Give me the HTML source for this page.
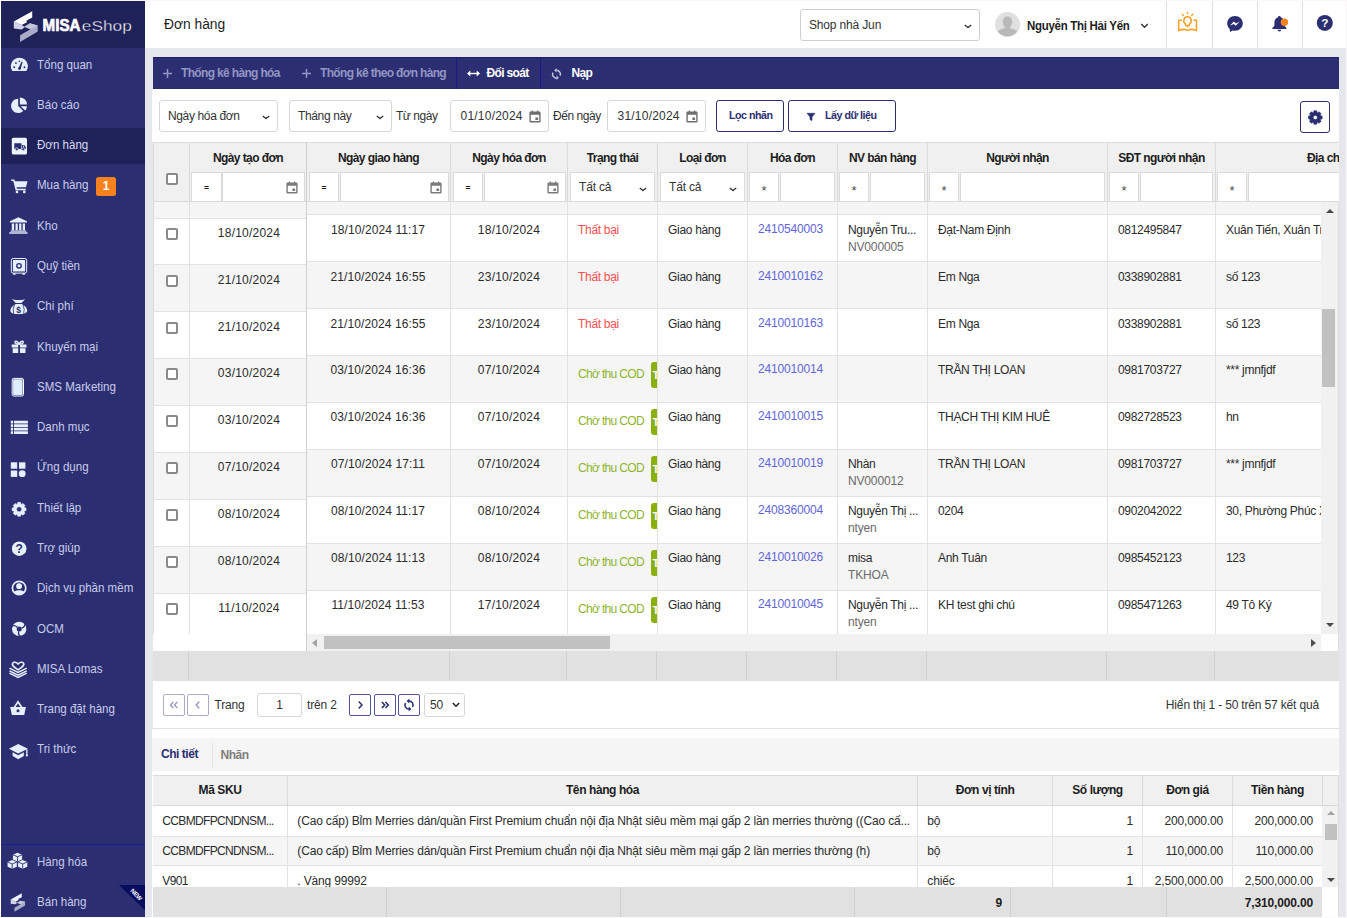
<!DOCTYPE html>
<html lang="vi"><head><meta charset="utf-8"><title>Đơn hàng</title>
<style>
*{box-sizing:border-box;margin:0;padding:0}
html,body{width:1347px;height:918px;overflow:hidden}
body{position:relative;background:#e6e7ec;font-family:"Liberation Sans",sans-serif;font-size:12px;color:#2b2b2b;line-height:1}
i,s,b{font-style:normal;text-decoration:none;font-weight:normal;display:block}
svg{display:block}
/* sidebar */
#side{position:absolute;left:1px;top:1px;width:144px;height:916px;background:#2b2f71;overflow:hidden}
#logo{position:absolute;left:0;top:0;width:144px;height:47px;background:#1f2259}
#logo svg{position:absolute;left:0;top:0}
.mi{position:absolute;left:0;width:144px;height:36px;color:#c9cbec;margin-top:-1px}
.mi.act{background:#1f2259;color:#d6d8f2}
.mi .ic{position:absolute;left:9px;top:8px;width:20px;height:20px}
.mi .ic svg{overflow:visible}
.mi .mt{position:absolute;left:36px;top:11.3px;font-size:12.6px;white-space:nowrap;transform:scaleX(.917);transform-origin:0 50%}
.badge{position:absolute;left:95px;top:9px;width:20px;height:19px;border-radius:2.5px;background:#f5821f;color:#fff;font-weight:bold;font-size:12px;text-align:center;line-height:19px}
.sdiv{position:absolute;left:0;top:843px;width:144px;height:1px;background:#1c1d8e}
.newtag{position:absolute;left:118px;top:884px}
/* top */
#top{position:absolute;left:145px;top:1px;width:1202px;height:47px;background:#fff}
#top .ttl{position:absolute;left:19px;top:16.7px;font-size:13.8px;color:#1d1d1d}
#top .shop{position:absolute;left:655px;top:8px;width:180px;height:32px;border:1px solid #cfcfcf;border-radius:3px;background:#fff}
#top .shop span{position:absolute;left:8px;top:9px;font-size:12px;letter-spacing:-.16px;color:#333}
#top .shop svg{position:absolute;right:7.5px;top:13.5px}
#top .ava{position:absolute;left:850px;top:10.5px;width:25px;height:25px}
#top .uname{position:absolute;left:882px;top:19.4px;font-weight:bold;font-size:12.6px;color:#1d1d1d;white-space:nowrap;letter-spacing:-.3px;transform:scaleX(.91);transform-origin:0 50%}
#top .uchev{position:absolute;left:995px;top:21.5px}
#top .vd{position:absolute;top:0;width:1px;height:47px;background:#e0e0e0}
#top .ti{position:absolute;top:9px;width:26px;height:28px}
#wbg{position:absolute;left:153px;top:89px;width:1186px;height:829px;background:#fff}
#wb1{position:absolute;left:152px;top:89px;width:1px;height:53px;background:#fff}
#wb2{position:absolute;left:152px;top:729px;width:1px;height:188px;background:#fff}
#wb3{position:absolute;left:152px;top:738px;width:1px;height:33px;background:#f5f5f5}
/* toolbar */
#tb{position:absolute;left:153px;top:57px;width:1186px;height:32px;background:#2b2f71;box-shadow:inset 0 1px 0 #1e2168}
.tbi{position:absolute;top:0;height:32px;color:#fff;font-weight:bold;font-size:12px;white-space:nowrap;letter-spacing:-0.66px}
.tbi.dim{color:#9295c4}
.tbi svg{position:absolute;left:0;top:11px}
.tbi span{position:absolute;left:19px;top:10px}
.tbi:not(.dim) span{left:21px}
.tbd{position:absolute;top:0;width:1px;height:32px;background:#1a1a8e}
/* filter bar */
#flt{position:absolute;left:153px;top:89px;width:1186px;height:53px;background:#fff}
.sel{position:absolute;top:11px;height:32px;border:1px solid #d6d6d6;border-radius:3px;background:#fff}
.sel span{position:absolute;left:8px;top:9px;font-size:12px;color:#333;white-space:nowrap;letter-spacing:-0.36px}
.sel svg{position:absolute;right:7.5px;top:13.5px}
.sel svg.cal{right:7px;top:9px}
.lb{position:absolute;top:21px;font-size:12px;color:#333;white-space:nowrap;letter-spacing:-0.46px}
.btn{position:absolute;top:11px;height:32px;border:1px solid #2b2f71;border-radius:3px;background:#fff;color:#2b2f71;font-weight:bold;font-size:10.7px;white-space:nowrap}
.btn span{position:absolute;top:8.6px;left:12px;letter-spacing:-.5px}
.btn svg{position:absolute;left:17px;top:10.5px}
.btn svg + span{left:36px}
.gearb{position:absolute;left:1147px;top:12px;width:30px;height:32px;border:1px solid #2b2f71;border-radius:3px;background:#fff}
.gearb svg{position:absolute;left:6px;top:7px}
/* grid */
#grid{position:absolute;left:153px;top:142px;width:1186px;height:539px;background:#fff;overflow:hidden}
#ghead{position:absolute;left:0;top:0;width:1186px;height:60px;background:#f0f0f0;border-top:1px solid #dcdcdc;border-bottom:1px solid #d9d9d9;z-index:3}
.hc{position:absolute;top:0;height:59px;border-left:1px solid #d9d9d9}
.hc:first-child{border-left:1px solid #dcdcdc}
.ht{position:absolute;left:0;right:0;top:9px;text-align:center;font-weight:bold;font-size:12px;color:#1d1d1d;white-space:nowrap;letter-spacing:-0.58px}
.fop,.fin{position:absolute;top:29px;height:30px;background:#fff;border:1px solid #dadada}
.eq{position:absolute;left:0;right:0;top:11px;text-align:center;font-size:8.5px;font-weight:bold;color:#222}
.as{position:absolute;left:0;right:0;top:11px;text-align:center;font-size:13px;color:#4a4a4a}
.fin svg{position:absolute;right:6px;top:8px}
.ft{position:absolute;left:8px;top:8px;font-size:12px;letter-spacing:-.16px;color:#333}
.cb{position:absolute;width:12px;height:12px;border:2px solid #8a8a8a;border-radius:2px;background:#fff}
#fz{position:absolute;left:0;top:60px;width:153px;height:432px;overflow:hidden;background:#fff;z-index:2}
#sc{position:absolute;left:153px;top:60px;width:1015px;height:432px;overflow:hidden;background:#fff}
#fzb{position:absolute;left:153px;top:0;width:1px;height:509px;background:#cfcfcf;z-index:4}
.r{position:absolute;left:0;right:0;background:#fff;border-bottom:1px solid #e2e2e2}
.r.alt{background:#f5f5f5}
.c{position:absolute;top:0;bottom:0;border-left:1px solid #e2e2e2;overflow:hidden;white-space:nowrap}
#fz .c:first-child{border-left:1px solid #dcdcdc}#sc .c:first-child{border-left:none}
.tx{position:absolute;left:10px;top:9.4px;font-size:12px;color:#2b2b2b;letter-spacing:-0.31px}
.ctr .tx{left:0;right:0;text-align:center}
.fzt{top:8.4px;left:2px !important}
.tx2{position:absolute;left:10px;top:26.4px;font-size:12px;letter-spacing:-.16px;color:#6a6a6a}
.red{color:#f85050}
.grn{color:#8eb52c;top:13.3px;letter-spacing:-.66px}
.lnk{color:#6166d8;top:7.6px;letter-spacing:-.16px}
.tag{position:absolute;left:82.5px;top:6px;width:40px;height:26px;border-radius:3px;background:#8ab00c;color:#fff;font-weight:bold;font-size:11px;padding:8px 0 0 2px}
/* scrollbars */
#vsb{position:absolute;left:1168px;top:60px;width:17px;height:432px;background:#f1f1f1}
#hsb{position:absolute;left:154px;top:492px;width:1014px;height:17px;background:#f1f1f1}
#vsb b{position:absolute;left:1px;width:13px;top:106.5px;height:78.5px;background:#c1c1c1}
#hsb b{position:absolute;top:2px;height:13px;left:17px;width:286px;background:#c1c1c1}
.up,.dn,.lf,.rg{position:absolute;width:0;height:0;border:4px solid transparent}
.up{left:4.5px;top:7px;border-bottom:4px solid #4a4a4a;border-top:none}
.dn{left:4.5px;bottom:7px;border-top:4px solid #4a4a4a;border-bottom:none}
.lf{left:5px;top:4.5px;border-right:5px solid #a3a3a3;border-left:none}
.rg{right:5.5px;top:4.5px;border-left:5px solid #505050;border-right:none}
#gsum{position:absolute;left:0;top:509px;width:1186px;height:30px;background:#e1e1e1}
#gsum s{position:absolute;top:0;width:1px;height:29px;background:#d0d0d0}
/* pager */
#pager{position:absolute;left:153px;top:681px;width:1186px;height:48px;background:#fff;border-bottom:1px solid #e2e2e2}
.pb{position:absolute;top:13px;width:22px;height:22px;border:1px solid #50539a;border-radius:2px;background:#fff}
.pb.dis{border-color:#a9abc9}
.pb svg{position:absolute;left:0;top:0}
.pl{position:absolute;top:17.5px;font-size:12px;letter-spacing:-.16px;color:#333;white-space:nowrap}
.pin{position:absolute;top:12px;width:45px;height:24px;border:1px solid #d6d6d6;border-radius:3px;text-align:center;line-height:22px;font-size:12px;letter-spacing:-.16px;color:#333}
.psel{position:absolute;top:12px;width:41px;height:24px;border:1px solid #d6d6d6;border-radius:3px}
.psel span{position:absolute;left:5px;top:5.3px;font-size:12px;letter-spacing:-.16px;color:#333}
.psel svg{position:absolute;right:4px;top:8px}
.pr{position:absolute;right:20px;top:17.5px;font-size:12px;letter-spacing:-.16px;color:#333;white-space:nowrap}
/* tabs */
#tabs{position:absolute;left:153px;top:738px;width:1186px;height:33px;background:#f5f5f5}
#tabs .t1{position:absolute;left:8px;top:10.4px;font-weight:bold;color:#2b2f71;font-size:12px;letter-spacing:-0.46px}
#tabs .t2{position:absolute;left:67.5px;top:11.4px;font-weight:bold;color:#7e7e7e;font-size:12px;letter-spacing:-0.46px}
#tabs i{position:absolute;left:59px;top:5px;width:1px;height:25px;background:#e2e2e2}
/* detail grid */
#dg{position:absolute;left:153px;top:775px;width:1186px;height:143px;background:#fff;overflow:hidden}
#dh{position:absolute;left:0;top:0;width:1186px;height:31px;background:#f0f0f0;border-top:1px solid #dcdcdc;border-bottom:1px solid #d9d9d9}
.dhc{position:absolute;top:0;height:29px;border-left:1px solid #d9d9d9;text-align:center;font-weight:bold;font-size:12px;color:#1d1d1d;padding-top:8px;white-space:nowrap;letter-spacing:-0.41px}
.dhc:first-child{border-left:none}
.dr{position:absolute;left:0;width:1169px;background:#fff;border-bottom:1px solid #e2e2e2}
.dr.alt{background:#f5f5f5}
.dc{position:absolute;top:0;bottom:0;border-left:1px solid #e2e2e2;overflow:hidden;white-space:nowrap}
.dc:first-child{border-left:none}
.dc span{position:absolute;left:9.3px;top:9px;font-size:12px;letter-spacing:-.16px;color:#2b2b2b}
.dc.rt span{left:auto;right:9px}
#dvsb{position:absolute;left:1169px;top:31px;width:16px;height:81px;background:#f1f1f1}
#dvsb b{position:absolute;left:2.5px;width:12px;top:17.5px;height:16.5px;background:#c1c1c1}
#dsum{position:absolute;left:0;top:112px;width:1169px;height:31px;background:#e1e1e1}
#dsum s{position:absolute;top:0;width:1px;height:31px;background:#d0d0d0}
#dsum span{position:absolute;top:10px;font-weight:bold;font-size:12px;letter-spacing:-.16px;color:#1d1d1d}
#dsum .n1{right:320px}
#dsum .n2{right:9px}

.num{letter-spacing:.22px !important}
.hc.last .ht{text-align:left;padding-left:91px}

#dvsb .up{top:5px}#dvsb .dn{bottom:5px}

#edge{position:absolute;left:0;top:917px;width:1347px;height:1px;background:#fbfbfd;z-index:9}
#edget{position:absolute;left:0;top:0;width:1347px;height:1px;background:#fdf6f8;z-index:9}
#edgel{position:absolute;left:0;top:0;width:1px;height:918px;background:#fff;z-index:9}

#edger{position:absolute;left:1346px;top:0;width:1px;height:918px;background:#fbf7f8;z-index:9}

.num2{letter-spacing:.09px !important}

.dc:first-child span{letter-spacing:-.66px}

#dvsb .up{border-bottom-color:#a3a3a3}

.fin svg.chv{right:7px;top:13.5px}

.sel span.num{left:9.5px}

#grb{position:absolute;left:1185px;top:60px;width:1px;height:449px;background:#dedede;z-index:5}
#dgrb{position:absolute;left:1185px;top:0;width:1px;height:143px;background:#dedede;z-index:5}

.s1 .tx,.s1 .tx2{margin-top:-1px}
.s2 .tx{margin-top:1px}

.s1 .dc span{margin-top:-1px}
.s2 .cb{margin-top:1px}

</style></head>
<body>
<div id="side">
<div id="logo"><svg width="144" height="47" viewBox="0 0 144 47"><path d="M28.74 22.31 L36.74 24.39 L36.74 30.62 L19.07 41.02 L19.07 34.26 L29.47 28.23 L23.23 25.74 L28.95 23.45Z" fill="#a9abc9"/><path d="M28.74 22.31 L36.74 24.39 L29.47 28.23 L23.23 25.74Z" fill="#c3c5db"/><path d="M12.83 20.54 L20.63 24.07 L23.96 25.95 L20.63 28.44 L12.83 27.50Z" fill="#d3d4e7"/><path d="M12.83 20.54 L31.23 10.15 L31.23 16.59 L25.31 19.71 L26.04 21.37 L20.63 24.07Z" fill="#fff"/>
<text x="41.6" y="30.4" font-family="Liberation Sans, sans-serif" font-weight="bold" font-size="16.6" fill="#fff" stroke="#fff" stroke-width=".7" textLength="37.8" lengthAdjust="spacingAndGlyphs">MISA</text>
<text x="80.8" y="30.4" font-family="Liberation Sans, sans-serif" font-size="14.4" fill="#fff" stroke="#1f2259" stroke-width=".35" textLength="50" lengthAdjust="spacingAndGlyphs">eShop</text></svg></div>
<div class="mi" style="top:47.4px"><span class="ic"><svg width="20" height="20" viewBox="0 0 20 20"><path d="M2.3 16.1 A8.55 8.55 0 1 1 16.4 16.1 Z" fill="#e5f0fd"/><circle cx="4.2" cy="12.3" r=".95" fill="#2b2f71"/><circle cx="5.9" cy="8.1" r=".95" fill="#2b2f71"/><circle cx="14.5" cy="12.3" r=".95" fill="#2b2f71"/><circle cx="9.3" cy="6.3" r=".8" fill="#2b2f71"/><path d="M8.2 13.8 L11.6 6.6 L12.6 7 L10.6 14.3Z" fill="#2b2f71"/><circle cx="9.4" cy="13.6" r="1.3" fill="#2b2f71"/></svg></span><span class="mt">Tổng quan</span></div>
<div class="mi" style="top:87.7px"><span class="ic"><svg width="20" height="20" viewBox="0 0 20 20"><path d="M8.2 2.8 V9.9 L13.2 14.9 A7.1 7.1 0 1 1 8.2 2.8Z" fill="#e5f0fd"/><path d="M9.9 1.4 A7.1 7.1 0 0 1 17 8.5 H9.9Z" fill="#e5f0fd"/><path d="M10.6 10.2 H17 A7.1 7.1 0 0 1 15.1 14.6Z" fill="#e5f0fd"/></svg></span><span class="mt">Báo cáo</span></div>
<div class="mi act" style="top:128.0px"><span class="ic"><svg width="20" height="20" viewBox="0 0 20 20"><rect x="1.8" y="1.7" width="15.2" height="16.9" rx="1.6" fill="#edf4fe"/><path d="M4.3 7.3h7.2v5.6H4.3z M12 8.9h2.2l1.5 1.9v2.1H12z" fill="#2b2f71"/><circle cx="6.7" cy="13.3" r="1.45" fill="#2b2f71" stroke="#edf4fe" stroke-width=".7"/><circle cx="13.2" cy="13.3" r="1.45" fill="#2b2f71" stroke="#edf4fe" stroke-width=".7"/><rect x="12.8" y="9.7" width="1.4" height="1.1" fill="#edf4fe"/></svg></span><span class="mt">Đơn hàng</span></div>
<div class="mi" style="top:168.2px"><span class="ic"><svg width="20" height="20" viewBox="0 0 20 20"><path d="M1.3 3.6h3.1l.5 1.6H17.5l-1.5 6.1H6.6l.3 1.4h8.9v1.5H5.6L3.3 5.1H1.3z" fill="#e5f0fd"/><circle cx="7" cy="15.9" r="1.35" fill="#e5f0fd"/><circle cx="14.3" cy="15.9" r="1.35" fill="#e5f0fd"/></svg></span><span class="mt">Mua hàng</span><span class="badge">1</span></div>
<div class="mi" style="top:208.5px"><span class="ic"><svg width="20" height="20" viewBox="0 0 20 20"><path d="M8.4 .3 L16.9 4.3 V5.6 H-.1 V4.3Z" fill="#e5f0fd"/><path d="M1.8 6.4h2.3v6.8H1.8z M5.5 6.4h2.3v6.8H5.5z M9.1 6.4h2.3v6.8H9.1z M12.7 6.4H15v6.8h-2.3z" fill="#e5f0fd"/><rect x=".6" y="13.5" width="15.6" height="1.2" fill="#e5f0fd"/><rect x="-.8" y="15.3" width="18.3" height="1.4" fill="#e5f0fd"/></svg></span><span class="mt">Kho</span></div>
<div class="mi" style="top:248.8px"><span class="ic"><svg width="20" height="20" viewBox="0 0 20 20"><rect x="1.3" y="1.5" width="15.4" height="14.6" rx="1.8" fill="none" stroke="#e5f0fd" stroke-width="1"/><rect x="2.9" y="3.1" width="12.2" height="11.4" rx=".6" fill="#e5f0fd"/><circle cx="9" cy="8.8" r="2.9" fill="#2b2f71"/><circle cx="9" cy="8.8" r="1.5" fill="#e5f0fd"/><path d="M3 16.3h2.6v1.5H3z M12.4 16.3H15v1.5h-2.6z" fill="#e5f0fd"/></svg></span><span class="mt">Quỹ tiền</span></div>
<div class="mi" style="top:289.1px"><span class="ic"><svg width="20" height="20" viewBox="0 0 20 20"><path d="M2 2.1 Q5.2 3.6 8.7 2.9 Q12.2 3.6 15.2 2.1 L11.6 6.1 H5.8 Z" fill="#e5f0fd"/><path d="M5.8 6.9 H11.6 C15.2 8.6 17.1 11 17.1 13.6 C17.1 16.3 14 17.2 8.7 17.2 C3.4 17.2 .4 16.3 .4 13.6 C.4 11 2.3 8.6 5.8 6.9Z" fill="#e5f0fd"/><path d="M4.4 8 Q2.4 12 3.7 16.8 M13 8 Q15 12 13.7 16.8" stroke="#2b2f71" stroke-width=".8" fill="none"/><text x="8.7" y="15.6" font-size="8.5" font-weight="bold" font-family="Liberation Sans, sans-serif" text-anchor="middle" fill="#2b2f71">$</text></svg></span><span class="mt">Chi phí</span></div>
<div class="mi" style="top:329.4px"><span class="ic"><svg width="20" height="20" viewBox="0 0 20 20"><path d="M1.7 7.4h6.5v3.1H1.7z M10 7.4h6.5v3.1H10z M2.7 11.3h5.5V16H2.7z M10 11.3h5.5V16H10z" fill="#e5f0fd"/><path d="M9.1 7.2C7.5 3.6 4.3 3.4 5.1 5.8 5.8 7 7.8 7.2 9.1 7.2Z M9.1 7.2C10.7 3.6 13.9 3.4 13.1 5.8 12.4 7 10.4 7.2 9.1 7.2Z" fill="none" stroke="#e5f0fd" stroke-width="1.5"/></svg></span><span class="mt">Khuyến mại</span></div>
<div class="mi" style="top:369.6px"><span class="ic"><svg width="20" height="20" viewBox="0 0 20 20"><rect x="2.2" y=".4" width="11.3" height="17.6" rx="1.6" fill="none" stroke="#ffffff" stroke-width="1"/><rect x="3.1" y="1.3" width="9.5" height="15.8" rx=".8" fill="#deeeff"/></svg></span><span class="mt">SMS Marketing</span></div>
<div class="mi" style="top:409.9px"><span class="ic"><svg width="20" height="20" viewBox="0 0 20 20"><path d="M.8 2.8h2.2v2.6H.8z M3.9 2.8H17.9v2.6H3.9z M.8 6.3h2.2v2.6H.8z M3.9 6.3H17.9v2.6H3.9z M.8 9.8h2.2v2.6H.8z M3.9 9.8H17.9v2.6H3.9z M.8 13.3h2.2v2.6H.8z M3.9 13.3H17.9v2.6H3.9z" fill="#e5f0fd"/></svg></span><span class="mt">Danh mục</span></div>
<div class="mi" style="top:450.2px"><span class="ic"><svg width="20" height="20" viewBox="0 0 20 20"><rect x=".8" y="4.3" width="6.4" height="6.4" fill="#e5f0fd"/><rect x="9" y="4.3" width="6.4" height="6.4" fill="#e5f0fd"/><rect x=".8" y="12.5" width="6.4" height="6.4" fill="#e5f0fd"/><circle cx="12.2" cy="15.7" r="3.4" fill="#e5f0fd"/></svg></span><span class="mt">Ứng dụng</span></div>
<div class="mi" style="top:490.5px"><span class="ic"><svg width="20" height="20" viewBox="0 0 20 20"><path d="M16.06 8.89 L16.06 11.71 L14.04 12.22 L13.95 12.44 L15.02 14.22 L13.02 16.22 L11.24 15.15 L11.02 15.24 L10.51 17.26 L7.69 17.26 L7.18 15.24 L6.96 15.15 L5.18 16.22 L3.18 14.22 L4.25 12.44 L4.16 12.22 L2.14 11.71 L2.14 8.89 L4.16 8.38 L4.25 8.16 L3.18 6.38 L5.18 4.38 L6.96 5.45 L7.18 5.36 L7.69 3.34 L10.51 3.34 L11.02 5.36 L11.24 5.45 L13.02 4.38 L15.02 6.38 L13.95 8.16 L14.04 8.38Z M11.6 10.3 A2.5 2.5 0 1 0 6.6 10.3 A2.5 2.5 0 1 0 11.6 10.3Z" fill="#e5f0fd" fill-rule="evenodd" stroke="#e5f0fd" stroke-width=".5" stroke-linejoin="round"/></svg></span><span class="mt">Thiết lập</span></div>
<div class="mi" style="top:530.8px"><span class="ic"><svg width="20" height="20" viewBox="0 0 20 20"><circle cx="9.2" cy="9.7" r="7.3" fill="#e5f0fd"/><text x="9.2" y="14" font-size="12" font-weight="bold" font-family="Liberation Sans, sans-serif" text-anchor="middle" fill="#2b2f71">?</text></svg></span><span class="mt">Trợ giúp</span></div>
<div class="mi" style="top:571.0px"><span class="ic"><svg width="20" height="20" viewBox="0 0 20 20"><circle cx="9.1" cy="9" r="6.7" fill="none" stroke="#e5f0fd" stroke-width="1.7"/><circle cx="9.1" cy="7.2" r="2.9" fill="#e5f0fd"/><path d="M3.8 13.2c1.5-2.6 9.1-2.6 10.6 0-1.5 2.1-3.3 2.9-5.3 2.9s-3.8-.8-5.3-2.9z" fill="#e5f0fd"/></svg></span><span class="mt">Dịch vụ phần mềm</span></div>
<div class="mi" style="top:611.3px"><span class="ic"><svg width="20" height="20" viewBox="0 0 20 20"><circle cx="9.2" cy="9.9" r="7.2" fill="#e5f0fd"/><circle cx="9.2" cy="9.9" r="2.5" fill="#2b2f71"/><path transform="rotate(20 9.2 9.9)" d="M11.2 8.4 Q14.7 5.4 12.399999999999999 2.5" fill="none" stroke="#2b2f71" stroke-width="1.3"/><path transform="rotate(140 9.2 9.9)" d="M11.2 8.4 Q14.7 5.4 12.399999999999999 2.5" fill="none" stroke="#2b2f71" stroke-width="1.3"/><path transform="rotate(260 9.2 9.9)" d="M11.2 8.4 Q14.7 5.4 12.399999999999999 2.5" fill="none" stroke="#2b2f71" stroke-width="1.3"/></svg></span><span class="mt">OCM</span></div>
<div class="mi" style="top:651.6px"><span class="ic"><svg width="20" height="20" viewBox="0 0 20 20"><path d="M8.1 9.9C3.5 6.8 1.5 5.3 2.5 3.4 3.8 1.6 6.6 2 8.1 4 9.6 2 12.4 1.6 13.7 3.4 14.7 5.3 12.7 6.8 8.1 9.9Z" fill="none" stroke="#e5f0fd" stroke-width="1.6"/><path d="M-.5 8.2l8.6 4.3 8.6-4.3M-.5 10.8l8.6 4.3 8.6-4.3M-.5 13.2l8.6 4.3 8.6-4.3" fill="none" stroke="#e5f0fd" stroke-width="1.5"/></svg></span><span class="mt">MISA Lomas</span></div>
<div class="mi" style="top:691.9px"><span class="ic"><svg width="20" height="20" viewBox="0 0 20 20"><path d="M.2 7h15.7l-1.7 8.1H1.9Z" fill="#e5f0fd"/><path d="M4.3 7.5 L8 1.8 L11.8 7.5" fill="none" stroke="#e5f0fd" stroke-width="1.7"/><circle cx="8" cy="10.8" r="1.5" fill="#2b2f71"/></svg></span><span class="mt">Trang đặt hàng</span></div>
<div class="mi" style="top:732.2px"><span class="ic"><svg width="20" height="20" viewBox="0 0 20 20"><path d="M8.2 3.9 L17.9 8.7 L8.2 13.5 L-1.1 8.7Z" fill="#e5f0fd"/><path d="M2.6 12.3V16l5.6 3.2 5.6-3.2v-3.7L8.2 15.3Z" fill="#e5f0fd"/><rect x="16.2" y="9.3" width="1.3" height="5.8" fill="#e5f0fd"/><circle cx="16.850" cy="15.5" r="1.1" fill="#e5f0fd"/></svg></span><span class="mt">Tri thức</span></div>
<div class="sdiv"></div>
<div class="mi" style="top:844.6px"><span class="ic"><svg width="22" height="20" viewBox="0 0 22 20"><g transform="translate(-4,-.7)"><path d="M11.5 .5l4.6 2v4.8l-4.6 2-4.6-2V2.5z" fill="#e5f0fd"/><path d="M6.2 7.7l4.6 2v4.8l-4.6 2-4.6-2V9.7z M16.7 7.7l4.6 2v4.8l-4.6 2-4.6-2V9.7z" fill="#e5f0fd"/><path d="M6.9 2.5l4.6 2 4.6-2M11.5 4.5v4.8M1.6 9.7l4.6 2 4.6-2M6.2 11.7v4.8M12.1 9.7l4.6 2 4.6-2M16.7 11.7v4.8" stroke="#2b2f71" stroke-width=".9" fill="none"/></g></svg></span><span class="mt">Hàng hóa</span></div>
<div class="mi" style="top:884.7px"><span class="ic"><svg width="20" height="20" viewBox="0 0 20 20"><g transform="translate(.7,.3) scale(.6) translate(-12.8,-10.1)"><path d="M28.74 22.31 L36.74 24.39 L36.74 30.62 L19.07 41.02 L19.07 34.26 L29.47 28.23 L23.23 25.74 L28.95 23.45Z" fill="#a9abc9"/><path d="M28.74 22.31 L36.74 24.39 L29.47 28.23 L23.23 25.74Z" fill="#c3c5db"/><path d="M12.83 20.54 L20.63 24.07 L23.96 25.95 L20.63 28.44 L12.83 27.50Z" fill="#d3d4e7"/><path d="M12.83 20.54 L31.23 10.15 L31.23 16.59 L25.31 19.71 L26.04 21.37 L20.63 24.07Z" fill="#f2f4fc"/></g></svg></span><span class="mt">Bán hàng</span></div>
<div class="newtag"><svg width="26" height="26" viewBox="0 0 26 26"><path d="M0 0H26V25Z" fill="#070c5e"/><text x="0" y="2.2" transform="translate(17.3,9.6) rotate(45)" font-family="Liberation Sans, sans-serif" font-size="6.2" font-weight="bold" fill="#fff" text-anchor="middle" letter-spacing="-.3">NEW</text></svg></div>
</div>
<div id="top">
<div class="ttl">Đơn hàng</div>
<div class="shop"><span>Shop nhà Jun</span><svg width="8" height="5" viewBox="0 0 8 5"><path d="M.8 .9 Q1.6 1.5 4 3.6 Q6.4 1.5 7.2 .9" fill="none" stroke="#333" stroke-width="1.3"/></svg></div>
<div class="ava"><svg width="25" height="25" viewBox="0 0 24 24"><circle cx="12" cy="12" r="12" fill="#e0e0e0"/><path d="M12 4.3c2.8 0 4.5 2 4.5 5 0 2-.8 3.8-2 4.8v1.2c2.6.8 5.5 1.8 6.9 3.4A12 12 0 0 1 2.6 18.7c1.4-1.6 4.3-2.6 6.9-3.4v-1.2c-1.2-1-2-2.8-2-4.8 0-3 1.7-5 4.5-5z" fill="#b9b9b9"/></svg></div>
<div class="uname">Nguyễn Thị Hải Yến</div>
<div class="uchev"><svg width="9" height="6" viewBox="0 0 9 6"><path d="M1.2 1 L4.5 4.2 L7.8 1" fill="none" stroke="#333" stroke-width="1.4"/></svg></div>
<i class="vd" style="left:1021px"></i><i class="vd" style="left:1067px"></i><i class="vd" style="left:1112px"></i><i class="vd" style="left:1157px"></i>
<div class="ti" style="left:1030px"><svg width="26" height="28" viewBox="0 0 26 28"><g fill="none" stroke="#fda029" stroke-width="1.55" stroke-linecap="round" stroke-linejoin="round"><path d="M6.3 10.2H3.7V20.6Q8.5 18.3 12.5 20.4Q16.5 18.3 21.5 20.6V10.2H18.9"/><path d="M12.5 6.8a3.8 3.8 0 0 1 2.3 6.8l-.5 1.9h-3.6l-.5-1.9A3.8 3.8 0 0 1 12.5 6.8z"/><path d="M12.5 2.5v1.1M7.3 4.4l.9.9M17.7 4.4l-.9.9"/></g><path d="M11.4 16.3h2.2l-.5 1.1h-1.2z" fill="#fda029"/></svg></div>
<div class="ti" style="left:1078px"><svg width="26" height="28" viewBox="0 0 26 28"><path d="M12 5.9c-4.4 0-7.8 3.2-7.8 7.4 0 2.3 1 4.2 2.5 5.6l.3 3.1 2.7-1.5c.7.2 1.5.3 2.3.3 4.4 0 7.8-3.2 7.8-7.5s-3.4-7.4-7.8-7.4z" fill="#2b2f71"/><path d="M6.9 15.8l3.9-4.2 2.2 1.9 3.7-1.9-3.9 4.2-2.2-1.9z" fill="#fff"/></svg></div>
<div class="ti" style="left:1122px"><svg width="26" height="28" viewBox="0 0 26 28"><path d="M12.4 6c.8 0 1.3.5 1.3 1.3 2.4.7 3.7 2.6 3.7 5.2v3.3l2 2.1v1H5.4v-1l2-2.1v-3.3c0-2.6 1.3-4.5 3.7-5.2 0-.8.5-1.3 1.3-1.3z" fill="#2b2f71"/><path d="M10.6 19.8h3.6a1.8 1.8 0 0 1-3.6 0z" fill="#2b2f71"/><circle cx="17.4" cy="12.2" r="3.7" fill="#f5821f"/></svg></div>
<div class="ti" style="left:1167px"><svg width="26" height="28" viewBox="0 0 26 28"><circle cx="12.8" cy="12.9" r="8" fill="#2b2f71"/><text x="12.8" y="17.1" font-size="11.8" font-weight="bold" font-family="Liberation Sans, sans-serif" text-anchor="middle" fill="#fff">?</text></svg></div>
</div>
<div id="wbg"></div><div id="wb1"></div><div id="wb2"></div><div id="wb3"></div>
<div id="tb">
<span class="tbi dim" style="left:9px"><svg width="11" height="11" viewBox="0 0 11 11"><path d="M5.5 1v9M1 5.5h9" stroke="#9295c4" stroke-width="1.5"/></svg><span>Thống kê hàng hóa</span></span>
<span class="tbi dim" style="left:148px"><svg width="11" height="11" viewBox="0 0 11 11"><path d="M5.5 1v9M1 5.5h9" stroke="#9295c4" stroke-width="1.5"/></svg><span>Thống kê theo đơn hàng</span></span>
<i class="tbd" style="left:303px"></i>
<span class="tbi" style="left:312.5px"><svg width="15" height="11" viewBox="0 0 15 11"><path d="M3.5 5.5h8" stroke="#fff" stroke-width="1.4"/><path d="M4.3 2.5L1 5.5l3.3 3z M10.7 2.5l3.3 3-3.3 3z" fill="#fff"/></svg><span>Đối soát</span></span>
<i class="tbd" style="left:387px"></i>
<span class="tbi" style="left:397.5px"><svg width="11" height="12" viewBox="0 0 11 12"><path d="M5.5 2.2a4 4 0 0 1 3.6 5.6M5.5 10.2A4 4 0 0 1 1.9 4.6" fill="none" stroke="#c5c7e6" stroke-width="1.4"/><path d="M5.5 0v4.4L3.2 2.2z M5.5 12V7.6l2.3 2.2z" fill="#c5c7e6"/></svg><span>Nạp</span></span>
</div>
<div id="flt">
<div class="sel" style="left:6px;width:119px"><span>Ngày hóa đơn</span><svg width="8" height="5" viewBox="0 0 8 5"><path d="M.8 .9 Q1.6 1.5 4 3.6 Q6.4 1.5 7.2 .9" fill="none" stroke="#333" stroke-width="1.3"/></svg></div>
<div class="sel" style="left:136px;width:103px"><span>Tháng này</span><svg width="8" height="5" viewBox="0 0 8 5"><path d="M.8 .9 Q1.6 1.5 4 3.6 Q6.4 1.5 7.2 .9" fill="none" stroke="#333" stroke-width="1.3"/></svg></div>
<span class="lb" style="left:243px">Từ ngày</span>
<div class="sel" style="left:297px;width:99px"><span class="num">01/10/2024</span><svg class="cal" width="12" height="13" viewBox="0 0 12 13"><path d="M1.7 1.5h8.6a1.3 1.3 0 0 1 1.3 1.3v8.4a1.3 1.3 0 0 1-1.3 1.3H1.7a1.3 1.3 0 0 1-1.3-1.3V2.8a1.3 1.3 0 0 1 1.3-1.3zM1.8 4.7v6.3h8.4V4.7z" fill="#6e6e6e" fill-rule="evenodd"/><path d="M2.7 .4h1.4v1.5H2.7zM7.9 .4h1.4v1.5H7.9zM6.4 7.5h2.7v2.6H6.4z" fill="#6e6e6e"/></svg></div>
<span class="lb" style="left:400px">Đến ngày</span>
<div class="sel" style="left:454px;width:99px"><span class="num">31/10/2024</span><svg class="cal" width="12" height="13" viewBox="0 0 12 13"><path d="M1.7 1.5h8.6a1.3 1.3 0 0 1 1.3 1.3v8.4a1.3 1.3 0 0 1-1.3 1.3H1.7a1.3 1.3 0 0 1-1.3-1.3V2.8a1.3 1.3 0 0 1 1.3-1.3zM1.8 4.7v6.3h8.4V4.7z" fill="#6e6e6e" fill-rule="evenodd"/><path d="M2.7 .4h1.4v1.5H2.7zM7.9 .4h1.4v1.5H7.9zM6.4 7.5h2.7v2.6H6.4z" fill="#6e6e6e"/></svg></div>
<div class="btn" style="left:563px;width:68px"><span>Lọc nhãn</span></div>
<div class="btn" style="left:635px;width:108px"><svg width="10" height="10" viewBox="0 0 10 10"><path d="M1 1.3h8L6 4.9v3.7L4 7.6V4.9z" fill="#2b2f71" stroke="#2b2f71" stroke-width=".6" stroke-linejoin="round"/></svg><span>Lấy dữ liệu</span></div>
<div class="gearb"><svg width="17" height="17" viewBox="0 0 17 17"><path d="M15.16 7.11 L15.16 9.89 L13.15 10.38 L13.06 10.60 L14.13 12.37 L12.17 14.33 L10.40 13.26 L10.18 13.35 L9.69 15.36 L6.91 15.36 L6.42 13.35 L6.20 13.26 L4.43 14.33 L2.47 12.37 L3.54 10.60 L3.45 10.38 L1.44 9.89 L1.44 7.11 L3.45 6.62 L3.54 6.40 L2.47 4.63 L4.43 2.67 L6.20 3.74 L6.42 3.65 L6.91 1.64 L9.69 1.64 L10.18 3.65 L10.40 3.74 L12.17 2.67 L14.13 4.63 L13.06 6.40 L13.15 6.62Z M10.4 8.5 A2.1 2.1 0 1 0 6.200000000000001 8.5 A2.1 2.1 0 1 0 10.4 8.5Z" fill="#2b2f71" fill-rule="evenodd" stroke="#2b2f71" stroke-width=".5" stroke-linejoin="round"/></svg></div>
</div>
<div id="grid">
<div id="ghead">
<div class="hc" style="left:0px;width:36px">
<span class="cb" style="left:12px;top:30px"></span>
</div>
<div class="hc" style="left:36px;width:117px">
<div class="ht">Ngày tạo đơn</div>
<div class="fop" style="left:1px;width:31px"><span class="eq">=</span></div><div class="fin" style="left:32px;width:83px"><svg width="12" height="13" viewBox="0 0 12 13"><path d="M1.7 1.5h8.6a1.3 1.3 0 0 1 1.3 1.3v8.4a1.3 1.3 0 0 1-1.3 1.3H1.7a1.3 1.3 0 0 1-1.3-1.3V2.8a1.3 1.3 0 0 1 1.3-1.3zM1.8 4.7v6.3h8.4V4.7z" fill="#7a7a7a" fill-rule="evenodd"/><path d="M2.7 .4h1.4v1.5H2.7zM7.9 .4h1.4v1.5H7.9zM6.4 7.5h2.7v2.6H6.4z" fill="#7a7a7a"/></svg></div>
</div>
<div class="hc" style="left:153px;width:144px">
<div class="ht">Ngày giao hàng</div>
<div class="fop" style="left:2px;width:30px"><span class="eq">=</span></div><div class="fin" style="left:33px;width:109px"><svg width="12" height="13" viewBox="0 0 12 13"><path d="M1.7 1.5h8.6a1.3 1.3 0 0 1 1.3 1.3v8.4a1.3 1.3 0 0 1-1.3 1.3H1.7a1.3 1.3 0 0 1-1.3-1.3V2.8a1.3 1.3 0 0 1 1.3-1.3zM1.8 4.7v6.3h8.4V4.7z" fill="#7a7a7a" fill-rule="evenodd"/><path d="M2.7 .4h1.4v1.5H2.7zM7.9 .4h1.4v1.5H7.9zM6.4 7.5h2.7v2.6H6.4z" fill="#7a7a7a"/></svg></div>
</div>
<div class="hc" style="left:297px;width:117px">
<div class="ht">Ngày hóa đơn</div>
<div class="fop" style="left:2px;width:30px"><span class="eq">=</span></div><div class="fin" style="left:33px;width:82px"><svg width="12" height="13" viewBox="0 0 12 13"><path d="M1.7 1.5h8.6a1.3 1.3 0 0 1 1.3 1.3v8.4a1.3 1.3 0 0 1-1.3 1.3H1.7a1.3 1.3 0 0 1-1.3-1.3V2.8a1.3 1.3 0 0 1 1.3-1.3zM1.8 4.7v6.3h8.4V4.7z" fill="#7a7a7a" fill-rule="evenodd"/><path d="M2.7 .4h1.4v1.5H2.7zM7.9 .4h1.4v1.5H7.9zM6.4 7.5h2.7v2.6H6.4z" fill="#7a7a7a"/></svg></div>
</div>
<div class="hc" style="left:414px;width:90px">
<div class="ht">Trạng thái</div>
<div class="fin" style="left:2px;width:85px"><span class="ft">Tất cả</span><svg class="chv" width="8" height="5" viewBox="0 0 8 5"><path d="M.8 .9 Q1.6 1.5 4 3.6 Q6.4 1.5 7.2 .9" fill="none" stroke="#333" stroke-width="1.3"/></svg></div>
</div>
<div class="hc" style="left:504px;width:90px">
<div class="ht">Loại đơn</div>
<div class="fin" style="left:2px;width:85px"><span class="ft">Tất cả</span><svg class="chv" width="8" height="5" viewBox="0 0 8 5"><path d="M.8 .9 Q1.6 1.5 4 3.6 Q6.4 1.5 7.2 .9" fill="none" stroke="#333" stroke-width="1.3"/></svg></div>
</div>
<div class="hc" style="left:594px;width:90px">
<div class="ht">Hóa đơn</div>
<div class="fop" style="left:1px;width:30px"><span class="as">*</span></div><div class="fin" style="left:32px;width:55px"></div>
</div>
<div class="hc" style="left:684px;width:90px">
<div class="ht">NV bán hàng</div>
<div class="fop" style="left:1px;width:30px"><span class="as">*</span></div><div class="fin" style="left:32px;width:55px"></div>
</div>
<div class="hc" style="left:774px;width:180px">
<div class="ht">Người nhận</div>
<div class="fop" style="left:1px;width:30px"><span class="as">*</span></div><div class="fin" style="left:32px;width:145px"></div>
</div>
<div class="hc" style="left:954px;width:108px">
<div class="ht">SĐT người nhận</div>
<div class="fop" style="left:1px;width:30px"><span class="as">*</span></div><div class="fin" style="left:32px;width:73px"></div>
</div>
<div class="hc last" style="left:1062px;width:204px">
<div class="ht">Địa chỉ</div>
<div class="fop" style="left:1px;width:30px"><span class="as">*</span></div><div class="fin" style="left:32px;width:169px"></div>
</div>
</div>
<div id="fz">
<div class="r alt" style="top:0;height:17px"><div class="c" style="left:0;width:36px"></div><div class="c" style="left:36px;width:117px"></div></div>
<div class="r" style="top:17px;height:46px"><div class="c" style="left:0;width:36px"><span class="cb" style="left:12px;top:9px"></span></div><div class="c ctr" style="left:36px;width:117px"><span class="tx fzt num">18/10/2024</span></div></div>
<div class="r alt s2" style="top:63px;height:47px"><div class="c" style="left:0;width:36px"><span class="cb" style="left:12px;top:9px"></span></div><div class="c ctr" style="left:36px;width:117px"><span class="tx fzt num">21/10/2024</span></div></div>
<div class="r s2" style="top:110px;height:47px"><div class="c" style="left:0;width:36px"><span class="cb" style="left:12px;top:9px"></span></div><div class="c ctr" style="left:36px;width:117px"><span class="tx fzt num">21/10/2024</span></div></div>
<div class="r alt" style="top:157px;height:47px"><div class="c" style="left:0;width:36px"><span class="cb" style="left:12px;top:9px"></span></div><div class="c ctr" style="left:36px;width:117px"><span class="tx fzt num">03/10/2024</span></div></div>
<div class="r" style="top:204px;height:47px"><div class="c" style="left:0;width:36px"><span class="cb" style="left:12px;top:9px"></span></div><div class="c ctr" style="left:36px;width:117px"><span class="tx fzt num">03/10/2024</span></div></div>
<div class="r alt" style="top:251px;height:47px"><div class="c" style="left:0;width:36px"><span class="cb" style="left:12px;top:9px"></span></div><div class="c ctr" style="left:36px;width:117px"><span class="tx fzt num">07/10/2024</span></div></div>
<div class="r" style="top:298px;height:47px"><div class="c" style="left:0;width:36px"><span class="cb" style="left:12px;top:9px"></span></div><div class="c ctr" style="left:36px;width:117px"><span class="tx fzt num">08/10/2024</span></div></div>
<div class="r alt" style="top:345px;height:47px"><div class="c" style="left:0;width:36px"><span class="cb" style="left:12px;top:9px"></span></div><div class="c ctr" style="left:36px;width:117px"><span class="tx fzt num">08/10/2024</span></div></div>
<div class="r" style="top:392px;height:47px"><div class="c" style="left:0;width:36px"><span class="cb" style="left:12px;top:9px"></span></div><div class="c ctr" style="left:36px;width:117px"><span class="tx fzt num">11/10/2024</span></div></div>
</div>
<div id="sc">
<div class="r alt" style="top:0;height:13px"><div class="c" style="left:0px;width:144px"></div><div class="c" style="left:144px;width:117px"></div><div class="c" style="left:261px;width:90px"></div><div class="c" style="left:351px;width:90px"></div><div class="c" style="left:441px;width:90px"></div><div class="c" style="left:531px;width:90px"></div><div class="c" style="left:621px;width:180px"></div><div class="c" style="left:801px;width:108px"></div><div class="c" style="left:909px;width:107px"></div></div>
<div class="r" style="top:13px;height:47px">
<div class="c ctr" style="left:0px;width:144px"><span class="tx num2">18/10/2024 11:17</span></div>
<div class="c ctr" style="left:144px;width:117px"><span class="tx num">18/10/2024</span></div>
<div class="c" style="left:261px;width:90px"><span class="tx red">Thất bại</span></div>
<div class="c" style="left:351px;width:90px"><span class="tx">Giao hàng</span></div>
<div class="c" style="left:441px;width:90px"><span class="tx lnk">2410540003</span></div>
<div class="c" style="left:531px;width:90px"><span class="tx">Nguyễn Tru...</span><span class="tx2">NV000005</span></div>
<div class="c" style="left:621px;width:180px"><span class="tx">Đạt-Nam Định</span></div>
<div class="c" style="left:801px;width:108px"><span class="tx">0812495847</span></div>
<div class="c" style="left:909px;width:124px"><span class="tx">Xuân Tiến, Xuân Tr</span></div>
</div>
<div class="r alt" style="top:60px;height:47px">
<div class="c ctr" style="left:0px;width:144px"><span class="tx num2">21/10/2024 16:55</span></div>
<div class="c ctr" style="left:144px;width:117px"><span class="tx num">23/10/2024</span></div>
<div class="c" style="left:261px;width:90px"><span class="tx red">Thất bại</span></div>
<div class="c" style="left:351px;width:90px"><span class="tx">Giao hàng</span></div>
<div class="c" style="left:441px;width:90px"><span class="tx lnk">2410010162</span></div>
<div class="c" style="left:531px;width:90px"></div>
<div class="c" style="left:621px;width:180px"><span class="tx">Em Nga</span></div>
<div class="c" style="left:801px;width:108px"><span class="tx">0338902881</span></div>
<div class="c" style="left:909px;width:124px"><span class="tx">số 123</span></div>
</div>
<div class="r" style="top:107px;height:47px">
<div class="c ctr" style="left:0px;width:144px"><span class="tx num2">21/10/2024 16:55</span></div>
<div class="c ctr" style="left:144px;width:117px"><span class="tx num">23/10/2024</span></div>
<div class="c" style="left:261px;width:90px"><span class="tx red">Thất bại</span></div>
<div class="c" style="left:351px;width:90px"><span class="tx">Giao hàng</span></div>
<div class="c" style="left:441px;width:90px"><span class="tx lnk">2410010163</span></div>
<div class="c" style="left:531px;width:90px"></div>
<div class="c" style="left:621px;width:180px"><span class="tx">Em Nga</span></div>
<div class="c" style="left:801px;width:108px"><span class="tx">0338902881</span></div>
<div class="c" style="left:909px;width:124px"><span class="tx">số 123</span></div>
</div>
<div class="r alt s1" style="top:154px;height:47px">
<div class="c ctr" style="left:0px;width:144px"><span class="tx num2">03/10/2024 16:36</span></div>
<div class="c ctr" style="left:144px;width:117px"><span class="tx num">07/10/2024</span></div>
<div class="c" style="left:261px;width:90px"><span class="tx grn">Chờ thu COD</span><span class="tag">T</span></div>
<div class="c" style="left:351px;width:90px"><span class="tx">Giao hàng</span></div>
<div class="c" style="left:441px;width:90px"><span class="tx lnk">2410010014</span></div>
<div class="c" style="left:531px;width:90px"></div>
<div class="c" style="left:621px;width:180px"><span class="tx">TRẦN THỊ LOAN</span></div>
<div class="c" style="left:801px;width:108px"><span class="tx">0981703727</span></div>
<div class="c" style="left:909px;width:124px"><span class="tx">*** jmnfjdf</span></div>
</div>
<div class="r s1" style="top:201px;height:47px">
<div class="c ctr" style="left:0px;width:144px"><span class="tx num2">03/10/2024 16:36</span></div>
<div class="c ctr" style="left:144px;width:117px"><span class="tx num">07/10/2024</span></div>
<div class="c" style="left:261px;width:90px"><span class="tx grn">Chờ thu COD</span><span class="tag">T</span></div>
<div class="c" style="left:351px;width:90px"><span class="tx">Giao hàng</span></div>
<div class="c" style="left:441px;width:90px"><span class="tx lnk">2410010015</span></div>
<div class="c" style="left:531px;width:90px"></div>
<div class="c" style="left:621px;width:180px"><span class="tx">THẠCH THỊ KIM HUÊ</span></div>
<div class="c" style="left:801px;width:108px"><span class="tx">0982728523</span></div>
<div class="c" style="left:909px;width:124px"><span class="tx">hn</span></div>
</div>
<div class="r alt s1" style="top:248px;height:47px">
<div class="c ctr" style="left:0px;width:144px"><span class="tx num2">07/10/2024 17:11</span></div>
<div class="c ctr" style="left:144px;width:117px"><span class="tx num">07/10/2024</span></div>
<div class="c" style="left:261px;width:90px"><span class="tx grn">Chờ thu COD</span><span class="tag">T</span></div>
<div class="c" style="left:351px;width:90px"><span class="tx">Giao hàng</span></div>
<div class="c" style="left:441px;width:90px"><span class="tx lnk">2410010019</span></div>
<div class="c" style="left:531px;width:90px"><span class="tx">Nhàn</span><span class="tx2">NV000012</span></div>
<div class="c" style="left:621px;width:180px"><span class="tx">TRẦN THỊ LOAN</span></div>
<div class="c" style="left:801px;width:108px"><span class="tx">0981703727</span></div>
<div class="c" style="left:909px;width:124px"><span class="tx">*** jmnfjdf</span></div>
</div>
<div class="r s1" style="top:295px;height:47px">
<div class="c ctr" style="left:0px;width:144px"><span class="tx num2">08/10/2024 11:17</span></div>
<div class="c ctr" style="left:144px;width:117px"><span class="tx num">08/10/2024</span></div>
<div class="c" style="left:261px;width:90px"><span class="tx grn">Chờ thu COD</span><span class="tag">T</span></div>
<div class="c" style="left:351px;width:90px"><span class="tx">Giao hàng</span></div>
<div class="c" style="left:441px;width:90px"><span class="tx lnk">2408360004</span></div>
<div class="c" style="left:531px;width:90px"><span class="tx">Nguyễn Thị ...</span><span class="tx2">ntyen</span></div>
<div class="c" style="left:621px;width:180px"><span class="tx">0204</span></div>
<div class="c" style="left:801px;width:108px"><span class="tx">0902042022</span></div>
<div class="c" style="left:909px;width:124px"><span class="tx">30, Phường Phúc X</span></div>
</div>
<div class="r alt s1" style="top:342px;height:47px">
<div class="c ctr" style="left:0px;width:144px"><span class="tx num2">08/10/2024 11:13</span></div>
<div class="c ctr" style="left:144px;width:117px"><span class="tx num">08/10/2024</span></div>
<div class="c" style="left:261px;width:90px"><span class="tx grn">Chờ thu COD</span><span class="tag">T</span></div>
<div class="c" style="left:351px;width:90px"><span class="tx">Giao hàng</span></div>
<div class="c" style="left:441px;width:90px"><span class="tx lnk">2410010026</span></div>
<div class="c" style="left:531px;width:90px"><span class="tx">misa</span><span class="tx2">TKHOA</span></div>
<div class="c" style="left:621px;width:180px"><span class="tx">Anh Tuân</span></div>
<div class="c" style="left:801px;width:108px"><span class="tx">0985452123</span></div>
<div class="c" style="left:909px;width:124px"><span class="tx">123</span></div>
</div>
<div class="r s1" style="top:389px;height:47px">
<div class="c ctr" style="left:0px;width:144px"><span class="tx num2">11/10/2024 11:53</span></div>
<div class="c ctr" style="left:144px;width:117px"><span class="tx num">17/10/2024</span></div>
<div class="c" style="left:261px;width:90px"><span class="tx grn">Chờ thu COD</span><span class="tag">T</span></div>
<div class="c" style="left:351px;width:90px"><span class="tx">Giao hàng</span></div>
<div class="c" style="left:441px;width:90px"><span class="tx lnk">2410010045</span></div>
<div class="c" style="left:531px;width:90px"><span class="tx">Nguyễn Thị ...</span><span class="tx2">ntyen</span></div>
<div class="c" style="left:621px;width:180px"><span class="tx">KH test ghi chú</span></div>
<div class="c" style="left:801px;width:108px"><span class="tx">0985471263</span></div>
<div class="c" style="left:909px;width:124px"><span class="tx">49 Tô Ký</span></div>
</div>
</div>
<div id="fzb"></div><div id="grb"></div>
<div id="vsb"><i class="up"></i><b></b><i class="dn"></i></div>
<div id="hsb"><i class="lf"></i><b></b><i class="rg"></i></div>
<div id="gsum"><s style="left:35px"></s><s style="left:296px"></s><s style="left:413px"></s><s style="left:503px"></s><s style="left:593px"></s><s style="left:683px"></s><s style="left:773px"></s><s style="left:953px"></s><s style="left:1061px"></s></div>
</div>
<div id="pager">
<span class="pb dis" style="left:10px"><svg width="20" height="20" viewBox="0 0 20 20"><path d="M9.3 7L6.5 10l2.8 3M13.3 7l-2.8 3 2.8 3" fill="none" stroke="#9fa1c6" stroke-width="1.5"/></svg></span>
<span class="pb dis" style="left:34px"><svg width="20" height="20" viewBox="0 0 20 20"><path d="M11.3 6.6L8.2 10l3.1 3.4" fill="none" stroke="#9fa1c6" stroke-width="1.5"/></svg></span>
<span class="pl" style="left:61.5px">Trang</span>
<span class="pin" style="left:104px">1</span>
<span class="pl" style="left:154px">trên 2</span>
<span class="pb" style="left:196px"><svg width="20" height="20" viewBox="0 0 20 20"><path d="M8.7 6.4L12 10l-3.3 3.6" fill="none" stroke="#2b2f71" stroke-width="1.5"/></svg></span>
<span class="pb" style="left:221px"><svg width="20" height="20" viewBox="0 0 20 20"><path d="M6.9 7L9.7 10l-2.8 3M10.5 7l2.8 3-2.8 3" fill="none" stroke="#2b2f71" stroke-width="1.6"/></svg></span>
<span class="pb" style="left:245px"><svg width="20" height="20" viewBox="0 0 20 20"><path d="M10 6a4 4 0 0 1 3.5 6M10 14a4 4 0 0 1-3.5-6" fill="none" stroke="#2b2f71" stroke-width="1.5"/><path d="M10.3 3.6v4.8L7.6 6z M9.7 16.4v-4.8l2.7 2.4z" fill="#2b2f71"/></svg></span>
<span class="psel" style="left:271px"><span>50</span><svg width="8" height="6" viewBox="0 0 8 6"><path d="M.8 1 L4 4.2 L7.2 1" fill="none" stroke="#222" stroke-width="1.5"/></svg></span>
<span class="pr">Hiển thị 1 - 50 trên 57 kết quả</span>
</div>
<div id="tabs"><span class="t1">Chi tiết</span><i></i><span class="t2">Nhãn</span></div>
<div id="dg">
<div id="dh">
<div class="dhc" style="left:0px;width:134px">Mã SKU</div>
<div class="dhc" style="left:134px;width:630px">Tên hàng hóa</div>
<div class="dhc" style="left:764px;width:135px">Đơn vị tính</div>
<div class="dhc" style="left:899px;width:90px">Số lượng</div>
<div class="dhc" style="left:989px;width:90px">Đơn giá</div>
<div class="dhc" style="left:1079px;width:90px">Tiền hàng</div>
<div class="dhc" style="left:1169px;width:17px"></div>
</div>
<div class="dr" style="top:31px;height:31px">
<div class="dc" style="left:0px;width:134px"><span>CCBMDFPCNDNSM...</span></div>
<div class="dc" style="left:134px;width:630px"><span>(Cao cấp) Bỉm Merries dán/quần First Premium chuẩn nội địa Nhật siêu mềm mại gấp 2 lần merries thường ((Cao cấ...</span></div>
<div class="dc" style="left:764px;width:135px"><span>bộ</span></div>
<div class="dc rt" style="left:899px;width:90px"><span>1</span></div>
<div class="dc rt" style="left:989px;width:90px"><span>200,000.00</span></div>
<div class="dc rt" style="left:1079px;width:90px"><span>200,000.00</span></div>
</div>
<div class="dr alt s1" style="top:62px;height:29px">
<div class="dc" style="left:0px;width:134px"><span>CCBMDFPCNDNSM...</span></div>
<div class="dc" style="left:134px;width:630px"><span>(Cao cấp) Bỉm Merries dán/quần First Premium chuẩn nội địa Nhật siêu mềm mại gấp 2 lần merries thường (h)</span></div>
<div class="dc" style="left:764px;width:135px"><span>bộ</span></div>
<div class="dc rt" style="left:899px;width:90px"><span>1</span></div>
<div class="dc rt" style="left:989px;width:90px"><span>110,000.00</span></div>
<div class="dc rt" style="left:1079px;width:90px"><span>110,000.00</span></div>
</div>
<div class="dr" style="top:91px;height:34px">
<div class="dc" style="left:0px;width:134px"><span>V901</span></div>
<div class="dc" style="left:134px;width:630px"><span>. Vàng 99992</span></div>
<div class="dc" style="left:764px;width:135px"><span>chiếc</span></div>
<div class="dc rt" style="left:899px;width:90px"><span>1</span></div>
<div class="dc rt" style="left:989px;width:90px"><span>2,500,000.00</span></div>
<div class="dc rt" style="left:1079px;width:90px"><span>2,500,000.00</span></div>
</div>
<div id="dgrb"></div>
<div id="dvsb"><i class="up"></i><b></b><i class="dn"></i></div>
<div id="dsum"><s style="left:233px"></s><s style="left:467px"></s><s style="left:701px"></s><s style="left:857px"></s><s style="left:1013px"></s><span class="n1">9</span><span class="n2">7,310,000.00</span></div>
</div>
<div id="edge"></div><div id="edget"></div><div id="edgel"></div><div id="edger"></div>
</body></html>
